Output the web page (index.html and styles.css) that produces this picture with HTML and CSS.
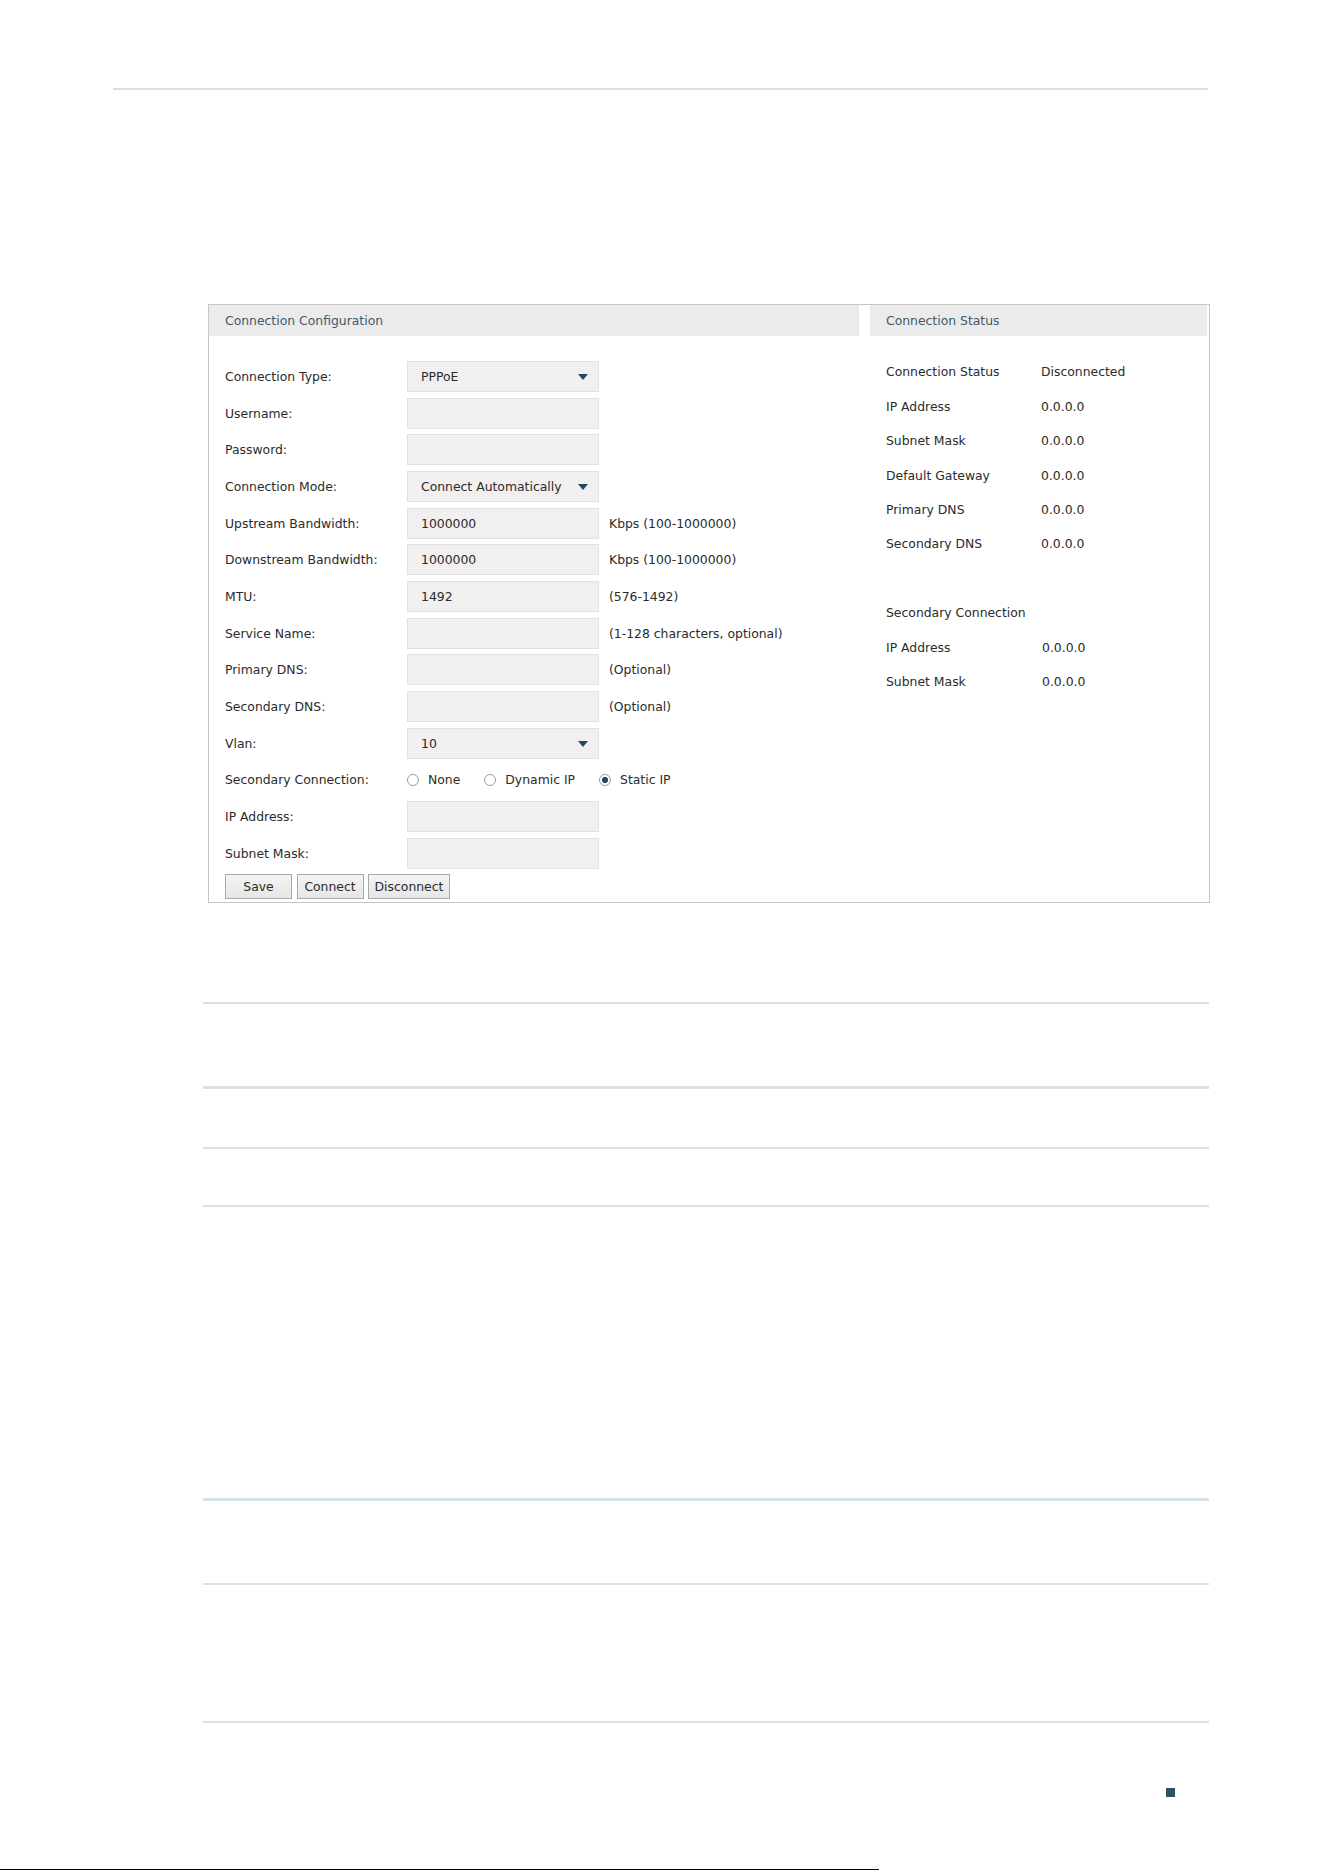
FILE: index.html
```html
<!DOCTYPE html>
<html lang="en">
<head>
  <meta charset="UTF-8">
  <meta name="viewport" content="width=device-width, initial-scale=1.0">
  <title>Internet - PPPoE</title>
  <link rel="stylesheet" href="styles.css">
</head>
<body>
  <div class="page">
    <div class="page-rule"></div>

    <div class="panel">
      <section class="config">
        <h3 class="panel-title">Connection Configuration</h3>
        <form class="config-form" onsubmit="return false">
          <div class="field">
            <label>Connection Type:</label>
            <div class="select-wrap">
              <select class="box">
                <option>PPPoE</option>
                <option>Dynamic IP</option>
                <option>Static IP</option>
              </select>
            </div>
          </div>
          <div class="field">
            <label>Username:</label>
            <input class="box" type="text">
          </div>
          <div class="field">
            <label>Password:</label>
            <input class="box" type="password">
          </div>
          <div class="field">
            <label>Connection Mode:</label>
            <div class="select-wrap">
              <select class="box">
                <option>Connect Automatically</option>
                <option>Connect Manually</option>
              </select>
            </div>
          </div>
          <div class="field">
            <label>Upstream Bandwidth:</label>
            <input class="box" type="text" value="1000000">
            <span class="hint">Kbps (100-1000000)</span>
          </div>
          <div class="field">
            <label>Downstream Bandwidth:</label>
            <input class="box" type="text" value="1000000">
            <span class="hint">Kbps (100-1000000)</span>
          </div>
          <div class="field">
            <label>MTU:</label>
            <input class="box" type="text" value="1492">
            <span class="hint">(576-1492)</span>
          </div>
          <div class="field">
            <label>Service Name:</label>
            <input class="box" type="text">
            <span class="hint">(1-128 characters, optional)</span>
          </div>
          <div class="field">
            <label>Primary DNS:</label>
            <input class="box" type="text">
            <span class="hint">(Optional)</span>
          </div>
          <div class="field">
            <label>Secondary DNS:</label>
            <input class="box" type="text">
            <span class="hint">(Optional)</span>
          </div>
          <div class="field">
            <label>Vlan:</label>
            <div class="select-wrap">
              <select class="box">
                <option>10</option>
              </select>
            </div>
          </div>
          <div class="field">
            <label>Secondary Connection:</label>
            <div class="radios">
              <label class="radio"><input type="radio" name="second"> None</label>
              <label class="radio"><input type="radio" name="second"> Dynamic IP</label>
              <label class="radio"><input type="radio" name="second" checked> Static IP</label>
            </div>
          </div>
          <div class="field">
            <label>IP Address:</label>
            <input class="box" type="text">
          </div>
          <div class="field">
            <label>Subnet Mask:</label>
            <input class="box" type="text">
          </div>
          <div class="buttons">
            <button class="btn btn-save">Save</button>
            <button class="btn btn-connect">Connect</button>
            <button class="btn btn-disconnect">Disconnect</button>
          </div>
        </form>
      </section>

      <section class="status">
        <h3 class="panel-title">Connection Status</h3>
        <div class="status-list">
          <div class="status-row"><span>Connection Status</span><span>Disconnected</span></div>
          <div class="status-row"><span>IP Address</span><span>0.0.0.0</span></div>
          <div class="status-row"><span>Subnet Mask</span><span>0.0.0.0</span></div>
          <div class="status-row"><span>Default Gateway</span><span>0.0.0.0</span></div>
          <div class="status-row"><span>Primary DNS</span><span>0.0.0.0</span></div>
          <div class="status-row"><span>Secondary DNS</span><span>0.0.0.0</span></div>
          <div class="status-row"></div>
          <div class="status-row"><span>Secondary Connection</span></div>
          <div class="status-row second"><span>IP Address</span><span>0.0.0.0</span></div>
          <div class="status-row second"><span>Subnet Mask</span><span>0.0.0.0</span></div>
        </div>
      </section>
    </div>

    <!-- parameter table below the figure -->
    <div class="doc-table">
      <div class="doc-row row-a"></div>
      <div class="doc-row thick row-b"></div>
      <div class="doc-row row-c"></div>
      <div class="doc-row row-d"></div>
      <div class="doc-row thick row-a"></div>
      <div class="doc-row row-e"></div>
      <div class="doc-row last"></div>
    </div>

    <footer class="page-foot">
      <span class="page-mark"></span>
    </footer>
    <div class="bottom-line"></div>
  </div>
</body>
</html>
```

FILE: styles.css
```css
html, body { margin: 0; padding: 0; background: #fff; }
body { font-family: "DejaVu Sans", Verdana, sans-serif; font-size: 12.4px; color: #2b2b2b; }
.page { height: 1872px; overflow: hidden; }

.page-rule { height: 2px; background: #d6e2e7; margin: 88px 116px 0 113px; }

/* figure: config + status panel */
.panel { display: flex; width: 998px; margin: 214px 0 0 208px; padding: 0 2px 3px 0; border: 1px solid #c6c6c6; }
.panel-title { margin: 0; height: 31px; line-height: 31px; padding-left: 16px; background: #ebebeb; color: #44596a; font-size: 12.4px; font-weight: normal; }
.config { width: 650px; }
.status { width: 337px; margin-left: 11px; }

.config-form { display: flex; flex-direction: column; gap: 5.67px; padding: 25px 0 0 16px; }
.field { display: flex; align-items: center; height: 31px; }
.field > label { width: 182px; flex: none; }
.box { box-sizing: border-box; width: 192px; height: 31px; margin: 0; padding: 0 0 0 13px; border: 1px solid #e2e0e0; background: #f1efef; font: inherit; color: #2b2b2b; outline: none; border-radius: 0; }
.select-wrap { position: relative; }
.select-wrap select { appearance: none; -webkit-appearance: none; cursor: pointer; }
.select-wrap::after { content: ""; position: absolute; right: 11px; top: 13px; border-left: 5px solid transparent; border-right: 5px solid transparent; border-top: 6px solid #25495c; pointer-events: none; }
.hint { margin-left: 10px; }

.radios { display: flex; align-items: center; }
.radio { display: flex; align-items: center; margin-right: 24px; }
.radio input { appearance: none; -webkit-appearance: none; width: 12px; height: 12px; margin: 0 9px 0 0; border: 1px solid #9c9c9c; border-radius: 50%; background: #fff; }
.radio input:checked { background: radial-gradient(circle, #274b5e 0 2.8px, #fff 3.4px); }

.buttons { display: flex; gap: 4.5px; margin-top: -0.4px; }
.btn { box-sizing: border-box; height: 25px; padding: 0; border: 1px solid #a8a8a8; background: linear-gradient(#f4f4f4, #e6e6e6); font: inherit; color: #2b2b2b; cursor: pointer; }
.btn-save, .btn-connect { width: 67px; }
.btn-disconnect { width: 82px; }

.status-list { padding: 18.5px 0 0 16px; }
.status-row { display: flex; align-items: center; height: 34.45px; }
.status-row span:first-child { width: 155px; }
.status-row.second span:last-child { padding-left: 1px; }

/* rules of the parameter table */
.doc-table { width: 1006px; margin: 99px 0 0 203px; }
.doc-row { border-top: 2px solid #d6e2e7; }
.doc-row.thick { border-top-width: 3px; }
.row-a { height: 82px; }
.row-b { height: 58px; }
.row-c { height: 56px; }
.row-d { height: 291px; }
.row-e { height: 136px; }

.page-foot { display: flex; justify-content: flex-end; padding-right: 149px; margin-top: 65px; }
.page-mark { width: 9px; height: 9px; background: #2b5468; }
.bottom-line { width: 879px; height: 1px; background: #000; margin-top: 72px; }
```
